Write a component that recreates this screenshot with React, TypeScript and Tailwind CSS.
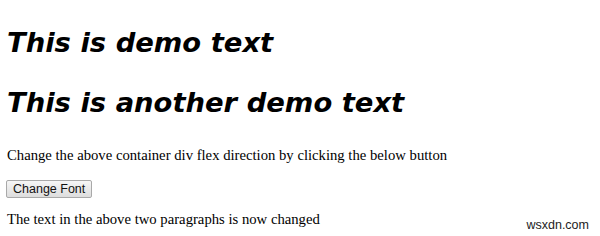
export default function App() {
  return (
    <div className="relative w-[600px] h-[236px] bg-white overflow-hidden text-black">
      <div className="px-[7px] pt-[26px]">
        <h1 className="text-[27.4px] leading-[34px] font-bold italic font-['DejaVu_Sans',sans-serif]">
          This is demo text
        </h1>
        <h1 className="mt-[26px] text-[27.4px] leading-[34px] font-bold italic font-['DejaVu_Sans',sans-serif]">
          This is another demo text
        </h1>
        <p className="mt-[26px] text-[14.7px] leading-[18px] font-['Liberation_Serif',serif]">
          Change the above container div flex direction by clicking the below button
        </p>
        <button className="mt-[16px] -ml-px h-[18px] px-[6px] text-[12.5px] leading-[16px] text-[#111] font-['Liberation_Sans',sans-serif] bg-gradient-to-b from-[#f6f6f6] to-[#dddddd] border border-[#a9a9a9] rounded-[2px]">
          Change Font
        </button>
        <p className="mt-[11px] text-[14.7px] leading-[18px] font-['Liberation_Serif',serif]">
          The text in the above two paragraphs is now changed
        </p>
      </div>
      <span className="absolute right-[11px] bottom-[4px] text-[12.5px] leading-[14px] text-[#222] font-['Liberation_Sans',sans-serif]">
        wsxdn.com
      </span>
    </div>
  );
}
